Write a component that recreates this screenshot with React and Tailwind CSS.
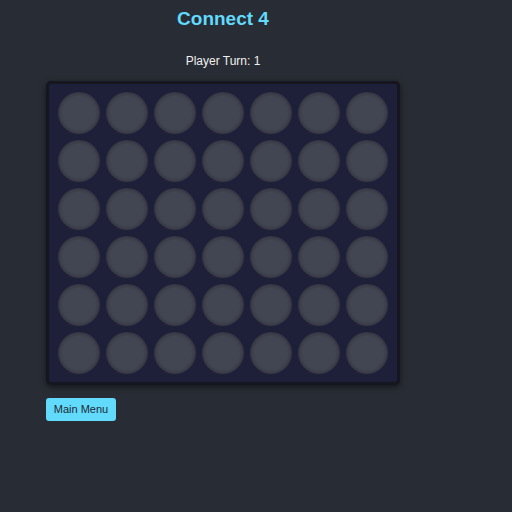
const ROWS = 6
const COLS = 7

function Cell() {
  return <div className="h-[42px] w-[42px] rounded-full bg-[#424552] shadow-[inset_0_0_4px_rgba(0,0,0,0.45)]" />
}

export default function App() {
  const cells = Array.from({ length: ROWS * COLS })
  return (
    <div className="min-h-screen bg-[#282c34] pl-[46px] font-['Liberation_Sans',Arial,sans-serif]">
      <div className="flex w-[354px] flex-col items-center">
        <h1 className="mt-[7px] text-[19px] font-bold leading-[23px] text-[#61dafb]">Connect 4</h1>
        <p className="mt-[24px] text-[12px] leading-[15px] text-[#f0f0f0]">Player Turn: 1</p>
        <div className="mt-[12px] grid w-[354px] grid-cols-7 gap-[6px] rounded-[5px] border-[3px] border-[#15161f] bg-[#1e1f38] px-[9px] py-[8px] shadow-[0_2px_6px_rgba(0,0,0,0.5)]">
          {cells.map((_, i) => (
            <Cell key={i} />
          ))}
        </div>
      </div>
      <button className="mt-[13px] h-[23px] w-[70px] rounded-[3px] bg-[#61dafb] text-[11px] text-[#1f2a36]">
        Main Menu
      </button>
    </div>
  )
}
